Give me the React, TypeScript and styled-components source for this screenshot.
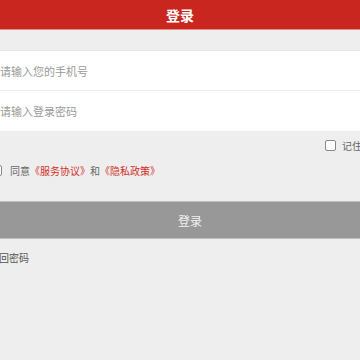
import React from 'react';
import styled, { createGlobalStyle } from 'styled-components';

const GlobalStyle = createGlobalStyle`
  html, body {
    margin: 0;
    padding: 0;
    background: #eeeeee;
    overflow: hidden;
    font-family: "Noto Sans CJK SC", "Noto Sans", sans-serif;
  }
`;

const Page = styled.div`
  width: 360px;
  height: 360px;
  overflow: hidden;
  background: #eeeeee;
`;

const Header = styled.header`
  display: flex;
  align-items: center;
  justify-content: center;
  height: 29px;
  background: #c9261f;
  border-bottom: 1px solid #e88a86;
  color: #fff;
  font-size: 14px;
  font-weight: bold;
`;

const Form = styled.div`
  margin: 0 -30px 0 -10px;
  padding-top: 20px;
`;

const Fields = styled.div`
  background: #fff;
  border-top: 1px solid #e6e6e6;
`;

const Field = styled.input`
  display: block;
  width: 100%;
  box-sizing: border-box;
  height: 40px;
  padding: 0 10px;
  border: none;
  border-bottom: 1px solid #ececec;
  background: #fff;
  font-family: inherit;
  font-size: 11px;
  outline: none;

  &::placeholder {
    color: #9a9a9a;
  }

  &:last-child {
    border-bottom: none;
  }
`;

const Row = styled.label<{ $right?: boolean }>`
  display: flex;
  align-items: center;
  justify-content: ${(p) => (p.$right ? 'flex-end' : 'flex-start')};
  gap: ${(p) => (p.$right ? '6px' : '8px')};
  height: ${(p) => (p.$right ? '28px' : '22px')};
  padding: ${(p) => (p.$right ? '0 8px 0 0' : '0 0 0 1px')};
  font-size: 10px;
  color: #666;
`;

const Box = styled.span`
  display: inline-block;
  width: 9px;
  height: 9px;
  border: 1.5px solid #888;
  border-radius: 2px;
  background: #fff;
`;

const Link = styled.span`
  color: #d22f28;
`;

const Submit = styled.button`
  display: block;
  width: 100%;
  height: 38px;
  margin-top: 20px;
  border: none;
  border-top: 1px solid #bdbdbd;
  border-bottom: 1px solid #bdbdbd;
  background: #989898;
  color: #f2f2f2;
  font-family: inherit;
  font-size: 12px;
`;

const Forgot = styled.div`
  padding-top: 11px;
  margin-left: -1px;
  font-size: 10px;
  color: #555;
`;

export default function App() {
  return (
    <Page>
      <GlobalStyle />
      <Header>登录</Header>
      <Form>
        <Fields>
          <Field placeholder="请输入您的手机号" />
          <Field type="password" placeholder="请输入登录密码" />
        </Fields>
        <Row $right>
          <Box />
          记住密码
        </Row>
        <Row>
          <Box />
          <span>
            同意<Link>《服务协议》</Link>和<Link>《隐私政策》</Link>
          </span>
        </Row>
        <Submit>登录</Submit>
        <Forgot>找回密码</Forgot>
      </Form>
    </Page>
  );
}
